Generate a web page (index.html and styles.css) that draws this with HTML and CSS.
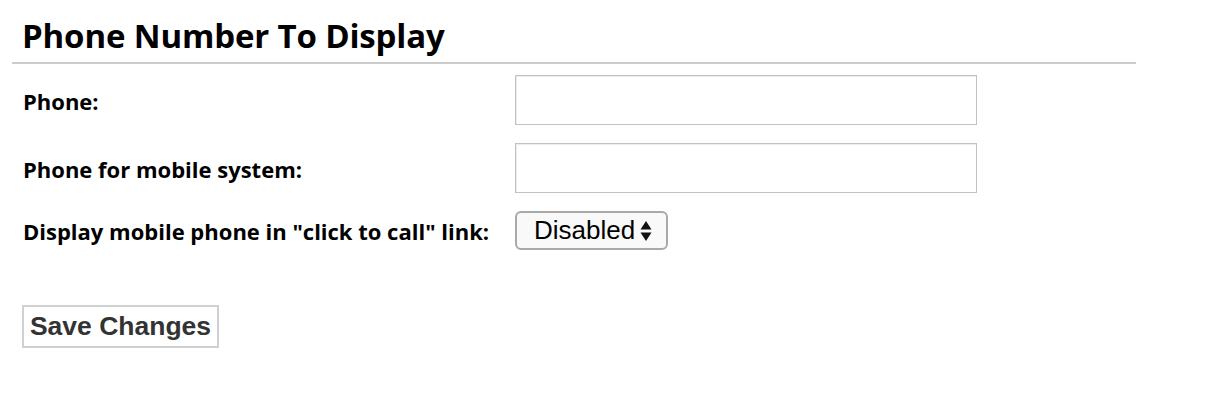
FILE: index.html
```html
<!DOCTYPE html>
<html>
<head>
<meta charset="utf-8">
<link rel="stylesheet" href="styles.css">
</head>
<body>
<div class="page">
  <h2 class="title">Phone Number To Display</h2>
  <form class="form">
    <div class="row">
      <label class="label">Phone:</label>
      <input class="field" type="text">
    </div>
    <div class="row">
      <label class="label">Phone for mobile system:</label>
      <input class="field" type="text">
    </div>
    <div class="row">
      <label class="label">Display mobile phone in "click to call" link:</label>
      <div class="select">
        <span class="select-text">Disabled</span>
        <svg class="arrows" width="12" height="22" viewBox="0 0 12 22"><path d="M6 1 L11.5 9.5 L0.5 9.5 Z M6 21 L11.5 12.5 L0.5 12.5 Z" fill="#111"/></svg>
      </div>
    </div>
    <div class="actions">
      <button class="btn" type="button">Save Changes</button>
    </div>
  </form>
</div>
</body>
</html>
```

FILE: styles.css
```css
html, body {
  margin: 0;
  padding: 0;
  background: #fff;
}
.page {
  width: 1124px;
  margin-left: 12px;
  font-family: "Open Sans", "Liberation Sans", sans-serif;
  color: #000;
}
.title {
  margin: 0;
  padding: 16px 0 7px 10px;
  font-size: 33px;
  font-weight: 700;
  line-height: 39px;
  letter-spacing: -0.15px;
  border-bottom: 2px solid #cccccc;
}
.form {
  padding: 11px 0 0 11px;
}
.row {
  display: flex;
  align-items: center;
  margin-bottom: 18px;
}
.label {
  width: 492px;
  font-size: 22px;
  font-weight: 700;
  line-height: 28px;
  letter-spacing: 0;
  padding-top: 1px;
}
.field {
  box-sizing: border-box;
  width: 462px;
  height: 50px;
  margin: 0;
  border: 1px solid #c2c2c2;
  box-shadow: inset 1px 1px 0 #ececec;
  background: #fff;
}
.select {
  box-sizing: border-box;
  width: 153px;
  height: 39px;
  border: 2px solid #a9a9a9;
  border-radius: 6px;
  background: #f9f9f9;
  display: flex;
  align-items: center;
  padding: 0 0 0 17px;
  gap: 5px;
  font-family: "Liberation Sans", Arial, sans-serif;
  font-size: 26px;
  color: #000;
}
.select-text {
  letter-spacing: 0;
}
.actions {
  padding-top: 37px;
}
.btn {
  box-sizing: border-box;
  width: 197px;
  height: 43px;
  margin: 0 0 0 -1px;
  border: 2px solid #d0d0d0;
  background: #fff;
  font-family: "Liberation Sans", Arial, sans-serif;
  font-weight: 700;
  font-size: 26.5px;
  color: #333;
  padding: 0;
}
```
